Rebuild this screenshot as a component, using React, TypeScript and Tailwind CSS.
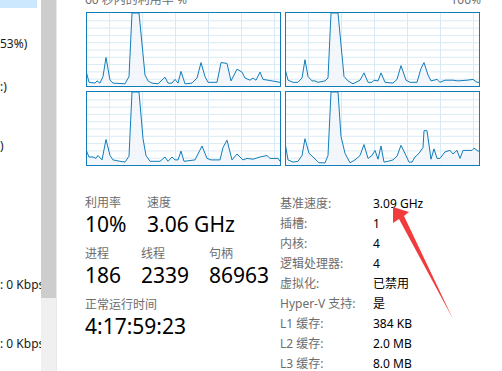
import React from 'react';

type Pt = [number, number];

// cpu samples per logical processor: [x offset in px, utilisation %]
const graphs: Pt[][] = [
  [[0,21],[3,5],[9,4],[11,7],[14,4],[17,13],[20,39],[24,8],[27,4],[39,3],[43,13],[46,100],[53,100],[59,15],[62,7],[66,4],[72,3],[79,12],[82,4],[86,4],[89,9],[92,4],[95,20],[99,3],[106,4],[111,11],[115,32],[119,13],[122,5],[131,5],[135,32],[141,31],[145,7],[151,23],[156,19],[159,11],[164,8],[167,11],[170,8],[174,19],[177,9],[182,8],[194,5]],
  [[0,24],[3,8],[8,5],[13,5],[17,11],[20,36],[23,13],[27,7],[30,7],[33,5],[40,7],[43,11],[46,100],[53,100],[59,13],[63,7],[68,3],[75,8],[79,18],[83,5],[87,5],[89,8],[93,7],[96,18],[100,5],[108,4],[112,9],[116,28],[121,8],[125,5],[132,5],[136,24],[139,32],[143,15],[146,7],[152,9],[155,5],[160,8],[165,8],[168,8],[173,7],[182,8],[188,9],[192,5],[195,5]],
  [[0,21],[3,11],[7,11],[10,9],[12,13],[16,7],[20,35],[24,13],[27,7],[34,5],[39,4],[43,12],[46,100],[53,100],[57,36],[60,13],[64,5],[74,5],[79,11],[82,5],[86,11],[89,7],[92,7],[95,19],[98,5],[109,7],[116,26],[121,9],[125,7],[134,7],[137,24],[141,34],[146,7],[151,15],[157,7],[161,9],[167,8],[174,11],[181,13],[184,9],[192,9],[194,5]],
  [[0,31],[3,7],[8,4],[13,5],[17,13],[20,36],[24,16],[28,11],[31,7],[34,3],[40,3],[43,13],[46,100],[53,100],[56,39],[60,16],[65,3],[70,7],[75,13],[79,28],[83,9],[87,13],[90,20],[93,8],[96,26],[99,4],[103,5],[108,7],[112,12],[116,27],[121,13],[124,4],[127,4],[130,11],[134,16],[138,24],[139,47],[142,47],[146,8],[149,22],[152,9],[155,9],[160,18],[165,20],[168,15],[172,20],[175,9],[178,20],[183,20],[187,20],[189,23],[193,19],[195,19]],
];

const W = 193;
const H = 73;

const CpuGraph: React.FC<{ data: Pt[] }> = ({ data }) => {
  const pts = data.map(([x, p]) => `${x - 1},${(H - (p / 100) * H).toFixed(1)}`);
  const area = `-1,${H} ${pts.join(' ')} ${W + 1},${H}`;
  return (
    <div className="w-[195px] h-[75px] border border-[#117dbb] bg-white">
      <svg width={W} height={H} className="block">
        {[1, 2, 3, 4, 5, 6, 7, 8, 9].map((i) => (
          <line key={'h' + i} x1={0} x2={W} y1={i * 7.3 + 0.5} y2={i * 7.3 + 0.5} stroke="#d9eaf4" strokeWidth={1} />
        ))}
        {[22, 55, 88, 121, 154, 187].map((x) => (
          <line key={'v' + x} x1={x + 0.5} x2={x + 0.5} y1={0} y2={H} stroke="#d9eaf4" strokeWidth={1} />
        ))}
        <polygon points={area} fill="#f1f6fa" fillOpacity={0.85} />
        <polyline points={pts.join(' ')} fill="none" stroke="#117dbb" strokeWidth={1} strokeLinejoin="round" />
      </svg>
    </div>
  );
};

const Stat: React.FC<{ label: string; value: string; w?: string }> = ({ label, value, w }) => (
  <div className={w}>
    <div className="text-[12px] leading-[16px] text-[#6d6d6d]">{label}</div>
    <div className="text-[21px] leading-[27px] text-black">{value}</div>
  </div>
);

const details: [string, string][] = [
  ['基准速度:', '3.09 GHz'],
  ['插槽:', '1'],
  ['内核:', '4'],
  ['逻辑处理器:', '4'],
  ['虚拟化:', '已禁用'],
  ['Hyper-V 支持:', '是'],
  ['L1 缓存:', '384 KB'],
  ['L2 缓存:', '2.0 MB'],
  ['L3 缓存:', '8.0 MB'],
];

export default function App() {
  return (
    <div className="relative w-[502px] h-[371px] overflow-hidden bg-white flex font-['Noto_Sans','Noto_Sans_CJK_SC',sans-serif]">
      {/* Left device list, scrolled off to the left */}
      <div className="w-[41px] shrink-0 flex flex-col overflow-hidden text-[12px] leading-[16px] text-[#1a1a1a] whitespace-nowrap">
        <div className="h-[8px] w-[37px] bg-[#cce8ff]" />
        <div className="mt-[28px]">53%)</div>
        <div className="mt-[27px]">:)</div>
        <div className="mt-[43px]">)</div>
        <div className="mt-[123px]">: 0 Kbps</div>
        <div className="mt-[43px]">: 0 Kbps</div>
      </div>

      {/* Scrollbar */}
      <div className="w-[15px] shrink-0 bg-[#f0f0f0] flex flex-col">
        <div className="h-[298px] bg-[#cdcdcd]" />
      </div>
      <div className="w-px shrink-0 bg-[#e8e8e8]" />

      {/* CPU page */}
      <div className="flex-1 pl-[28px] pr-[21px]">
        <div className="-mt-[8px] h-[20px] flex justify-between text-[12px] leading-[16px] text-[#6d6d6d]">
          <span>60 秒内的利用率 %</span>
          <span>100%</span>
        </div>
        <div className="ml-[1px] grid grid-cols-[195px_195px] gap-x-[4px] gap-y-[4px]">
          {graphs.map((g, i) => (
            <CpuGraph key={i} data={g} />
          ))}
        </div>

        <div className="mt-[28px] flex">
          <div className="w-[195px] pt-[1px] flex flex-col gap-[8px]">
            <div className="flex">
              <Stat label="利用率" value="10%" w="w-[62px]" />
              <Stat label="速度" value="3.06 GHz" />
            </div>
            <div className="flex">
              <Stat label="进程" value="186" w="w-[56px]" />
              <Stat label="线程" value="2339" w="w-[68px]" />
              <Stat label="句柄" value="86963" />
            </div>
            <Stat label="正常运行时间" value="4:17:59:23" />
          </div>
          <div className="grid grid-cols-[93px_auto] text-[12px] leading-[20px]">
            {details.map(([k, v]) => (
              <React.Fragment key={k}>
                <div className="text-[#6d6d6d] whitespace-nowrap">{k}</div>
                <div className="text-black">{v}</div>
              </React.Fragment>
            ))}
          </div>
        </div>
      </div>

      {/* red annotation arrow */}
      <svg className="absolute inset-0 pointer-events-none" width={502} height={371}>
        <polygon points="393,207 409,212 404,216 453,319 399,219 393,223" fill="#f03c3c" />
      </svg>
    </div>
  );
}
